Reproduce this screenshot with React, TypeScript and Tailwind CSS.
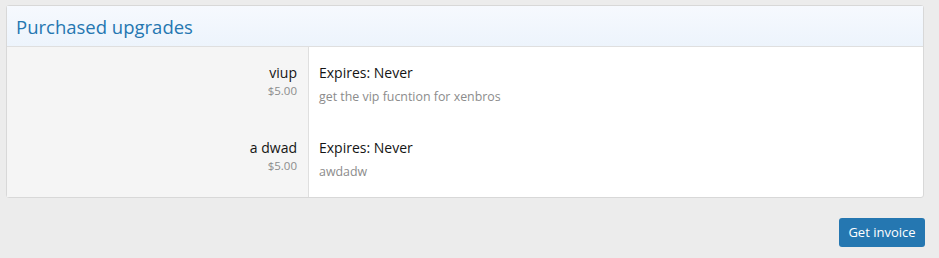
const upgrades = [
  { title: 'viup', cost: '$5.00', expires: 'Never', description: 'get the vip fucntion for xenbros' },
  { title: 'a dwad', cost: '$5.00', expires: 'Never', description: 'awdadw' },
];

export default function App() {
  return (
    <div className="min-h-[258px] bg-[#ececec] px-[6px] pt-[5px] font-['Open_Sans',sans-serif]">
      {/* block */}
      <div className="w-[918px] rounded-[3px] border border-[#d8d8d8] bg-white">
        <h2 className="h-[41px] border-b border-[#dfdfdf] bg-gradient-to-b from-[#f6f9fe] to-[#edf4fc] px-[9px] pt-[9px] text-[18.5px] leading-[23px] text-[#2577b1]">
          Purchased upgrades
        </h2>
        <div>
          {upgrades.map((u) => (
            <div key={u.title} className="flex h-[75px]">
              <div className="w-[302px] shrink-0 border-r border-[#dfdfdf] bg-[#f5f5f5] pr-[11px] pt-[16px] text-right">
                <div className="text-[14px] leading-[19px] text-[#141414]">{u.title}</div>
                <div className="text-[11.5px] leading-[17px] text-[#8c8c8c]">{u.cost}</div>
              </div>
              <div className="pl-[10px] pt-[16px]">
                <div className="text-[14px] leading-[19px] text-[#141414]">Expires: {u.expires}</div>
                <div className="mt-[6px] text-[12.4px] leading-[17px] text-[#8c8c8c]">{u.description}</div>
              </div>
            </div>
          ))}
        </div>
      </div>
      <div className="flex w-[919px] justify-end pt-[20px]">
        <button className="h-[29px] w-[86px] rounded-[3px] bg-[#2577b1] text-[13px] text-white">
          Get invoice
        </button>
      </div>
    </div>
  );
}
